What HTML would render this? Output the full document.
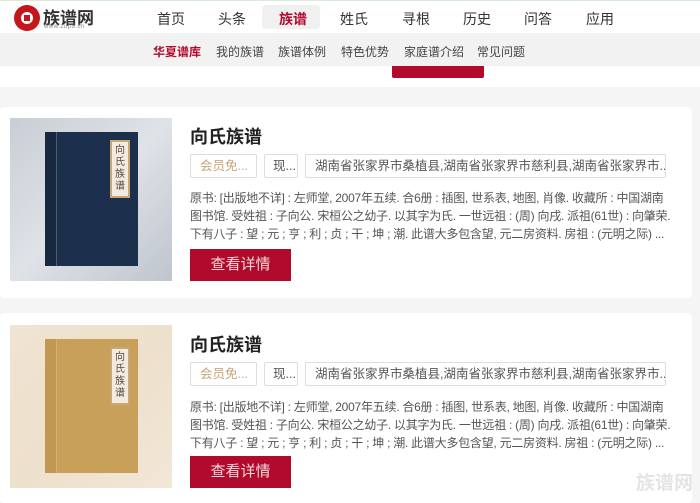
<!DOCTYPE html>
<html><head><meta charset="utf-8"><style>
*{margin:0;padding:0;box-sizing:border-box}
body{width:700px;height:492px;overflow:hidden;background:#f5f5f5;font-family:"Liberation Sans","Noto Sans CJK SC",sans-serif;position:relative}
.a{position:absolute;white-space:nowrap}
.hdr{position:absolute;left:0;top:0;width:700px;height:33px;background:#fff;border-top:1px solid #d8ecd8}
.nav{font-size:14px;color:#333;top:9px}
.sub{position:absolute;left:0;top:33px;width:700px;height:33px;background:#f2f2f2}
.s{font-size:12px;color:#444;top:43px}
.card{position:absolute;left:0;width:692px;background:#fff;border-radius:4px}
.title{font-size:18px;font-weight:bold;color:#222}
.tag{position:absolute;height:24px;border:1px solid #ddd;border-radius:2px;font-size:12.5px;color:#555;line-height:22px;padding-left:9px;background:#fff;white-space:nowrap;overflow:hidden}
.desc{font-size:12px;color:#555;line-height:18px;letter-spacing:-0.25px}
.btn{position:absolute;width:101px;height:32px;background:#b20a2c;color:#f4dada;font-size:15px;text-align:center;line-height:32px}
.img{position:absolute;width:162px;height:163px}
.book{position:absolute;left:35px;top:14px;width:93px;height:134px}
.spine{position:absolute;left:0;top:0;width:12px;height:134px;border-right:1px solid rgba(255,255,255,.25)}
.lbl{position:absolute;left:65px;top:8px;width:20px;height:58px;background:#f3ebe0;border:2px solid #c9a877;font-size:10px;color:#5a4a3a;line-height:12px;text-align:center;padding-top:3px}
</style></head><body>
<div class="hdr"></div>
<div class="a" style="left:14px;top:5px;width:26px;height:26px;border-radius:50%;background:#c4161c"></div>
<div class="a" style="left:21px;top:12px;width:12px;height:12px;border-radius:50%;background:#fff"></div>
<div class="a" style="left:24px;top:15px;width:6px;height:6px;background:#c4161c"></div>
<div class="a" style="left:43px;top:4px;font-size:17px;font-weight:bold;color:#333">族谱网</div>
<div class="a" style="left:44px;top:24px;font-size:6px;color:#888;letter-spacing:.5px">www.zupu.cn</div>
<div class="a" style="left:262px;top:5px;width:58px;height:24px;background:#f0f0f0;border-radius:4px"></div>
<div class="a nav" style="left:157px">首页</div>
<div class="a nav" style="left:218px">头条</div>
<div class="a nav" style="left:279px;color:#b20a2c;font-weight:bold">族谱</div>
<div class="a nav" style="left:340px">姓氏</div>
<div class="a nav" style="left:402px">寻根</div>
<div class="a nav" style="left:463px">历史</div>
<div class="a nav" style="left:524px">问答</div>
<div class="a nav" style="left:586px">应用</div>
<div class="sub"></div>
<div class="a s" style="left:153px;color:#b20a2c;font-weight:bold">华夏谱库</div>
<div class="a s" style="left:216px">我的族谱</div>
<div class="a s" style="left:278px">族谱体例</div>
<div class="a s" style="left:341px">特色优势</div>
<div class="a s" style="left:404px">家庭谱介绍</div>
<div class="a s" style="left:477px">常见问题</div>
<div class="a" style="left:0;top:66px;width:700px;height:21px;background:#fff"></div>
<div class="a" style="left:392px;top:66px;width:92px;height:12px;background:#b20a2c;border-radius:0 0 2px 2px"></div>

<div class="card" style="top:107px;height:191px">
<div class="img" style="left:10px;top:11px;background:linear-gradient(135deg,#c9ced6,#dfe2e7 50%,#bfc5ce)">
<div class="book" style="background:#1c2f4d"><div class="spine" style="background:#18283f"></div><div class="lbl">向<br>氏<br>族<br>谱</div></div></div>
<div class="a title" style="left:190px;top:16px">向氏族谱</div>
<div class="tag" style="left:190px;top:47px;width:67px;color:#c9a47a">会员免...</div>
<div class="tag" style="left:264px;top:47px;width:34px;padding-left:8px">现...</div>
<div class="tag" style="left:305px;top:47px;width:361px">湖南省张家界市桑植县,湖南省张家界市慈利县,湖南省张家界市...</div>
<div class="a desc" style="left:190px;top:82px">原书: [出版地不详] : 左师堂, 2007年五续. 合6册 : 插图, 世系表, 地图, 肖像. 收藏所 : 中国湖南<br>图书馆. 受姓祖 : 子向公. 宋桓公之幼子. 以其字为氏. 一世远祖 : (周) 向戌. 派祖(61世) : 向肇荣.<br>下有八子 : 望 ; 元 ; 亨 ; 利 ; 贞 ; 干 ; 坤 ; 潮. 此谱大多包含望, 元二房资料. 房祖 : (元明之际) ...</div>
<div class="btn" style="left:190px;top:142px">查看详情</div>
</div>

<div class="card" style="top:313px;height:190px">
<div class="img" style="left:10px;top:12px;background:linear-gradient(135deg,#f0e4d2,#ede0cc 50%,#f2e6d6)">
<div class="book" style="background:#c8a05a"><div class="spine" style="background:#c19752"></div><div class="lbl">向<br>氏<br>族<br>谱</div></div></div>
<div class="a title" style="left:190px;top:18px">向氏族谱</div>
<div class="tag" style="left:190px;top:49px;width:67px;color:#c9a47a">会员免...</div>
<div class="tag" style="left:264px;top:49px;width:34px;padding-left:8px">现...</div>
<div class="tag" style="left:305px;top:49px;width:361px">湖南省张家界市桑植县,湖南省张家界市慈利县,湖南省张家界市...</div>
<div class="a desc" style="left:190px;top:85px">原书: [出版地不详] : 左师堂, 2007年五续. 合6册 : 插图, 世系表, 地图, 肖像. 收藏所 : 中国湖南<br>图书馆. 受姓祖 : 子向公. 宋桓公之幼子. 以其字为氏. 一世远祖 : (周) 向戌. 派祖(61世) : 向肇荣.<br>下有八子 : 望 ; 元 ; 亨 ; 利 ; 贞 ; 干 ; 坤 ; 潮. 此谱大多包含望, 元二房资料. 房祖 : (元明之际) ...</div>
<div class="btn" style="left:190px;top:143px">查看详情</div>
</div>
<div class="a" style="left:636px;top:468px;font-size:19px;color:#e4e4e4;font-weight:bold">族谱网</div>
</body></html>
